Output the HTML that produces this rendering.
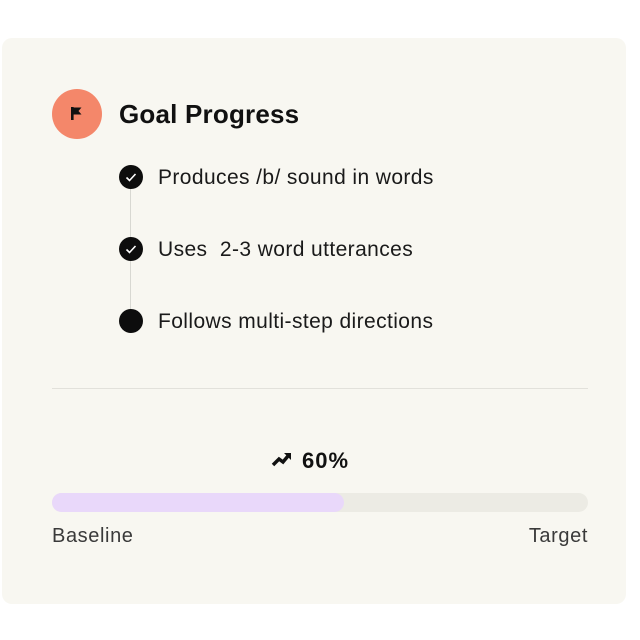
<!DOCTYPE html>
<html><head><style>
body{margin:0;width:640px;height:640px;background:#fff;font-family:"Liberation Sans",sans-serif;position:relative;overflow:hidden}
.card{position:absolute;left:2px;top:38px;width:624px;height:566px;background:#f8f7f1;border-radius:10px}
.a{position:absolute}
.dot{position:absolute;left:119px;width:24px;height:24px;border-radius:50%;background:#0d0d0d}
.it{position:absolute;left:158px;font-size:21px;color:#1a1a1a;line-height:24px;letter-spacing:0.4px}
</style></head><body>
<div class="card"></div>
<div class="a" style="left:52px;top:89px;width:50px;height:50px;border-radius:50%;background:#f4876a"></div>
<svg class="a" style="left:68px;top:105px" width="18" height="18" viewBox="0 0 18 18"><path d="M3 2h2.6v13H3z M5 2.5h8.5l-3 3.5 3 3.5H5z" fill="#111"/></svg>
<div class="a" style="left:119px;top:98px;font-size:26px;font-weight:bold;color:#111;line-height:32px;letter-spacing:0.2px">Goal Progress</div>
<div class="a" style="left:130px;top:177px;width:1px;height:144px;background:#d8d8d2"></div>
<div class="dot" style="top:165px"></div>
<div class="dot" style="top:237px"></div>
<div class="dot" style="top:309px"></div>
<svg class="a" style="left:119px;top:165px" width="24" height="24"><path d="M7.5 12.5l3 3 6-6.5" stroke="#fff" stroke-width="1.6" fill="none"/></svg>
<svg class="a" style="left:119px;top:237px" width="24" height="24"><path d="M7.5 12.5l3 3 6-6.5" stroke="#fff" stroke-width="1.6" fill="none"/></svg>
<div class="it" style="top:166px">Produces /b/ sound in words</div>
<div class="it" style="top:238px">Uses&nbsp; 2-3 word utterances</div>
<div class="it" style="top:310px">Follows multi-step directions</div>
<div class="a" style="left:52px;top:388px;width:536px;height:1px;background:#e2e1db"></div>
<svg class="a" style="left:271px;top:451px" width="22" height="18" viewBox="0 0 22 18"><path d="M2 14l6-6 4 3 5-6" stroke="#111" stroke-width="3.5" fill="none"/><path d="M13 2h7v7z" fill="#111"/></svg>
<div class="a" style="left:302px;top:448px;font-size:22px;font-weight:bold;color:#111;line-height:26px;letter-spacing:1px">60%</div>
<div class="a" style="left:52px;top:493px;width:536px;height:19px;border-radius:10px;background:#ecebe4"></div>
<div class="a" style="left:52px;top:493px;width:292px;height:19px;border-radius:10px;background:#e9d8fa"></div>
<div class="a" style="left:52px;top:524px;font-size:20px;color:#3a3a3a;line-height:24px;letter-spacing:0.6px">Baseline</div>
<div class="a" style="right:52px;top:524px;font-size:20px;color:#3a3a3a;line-height:24px;letter-spacing:0.6px">Target</div>
</body></html>
